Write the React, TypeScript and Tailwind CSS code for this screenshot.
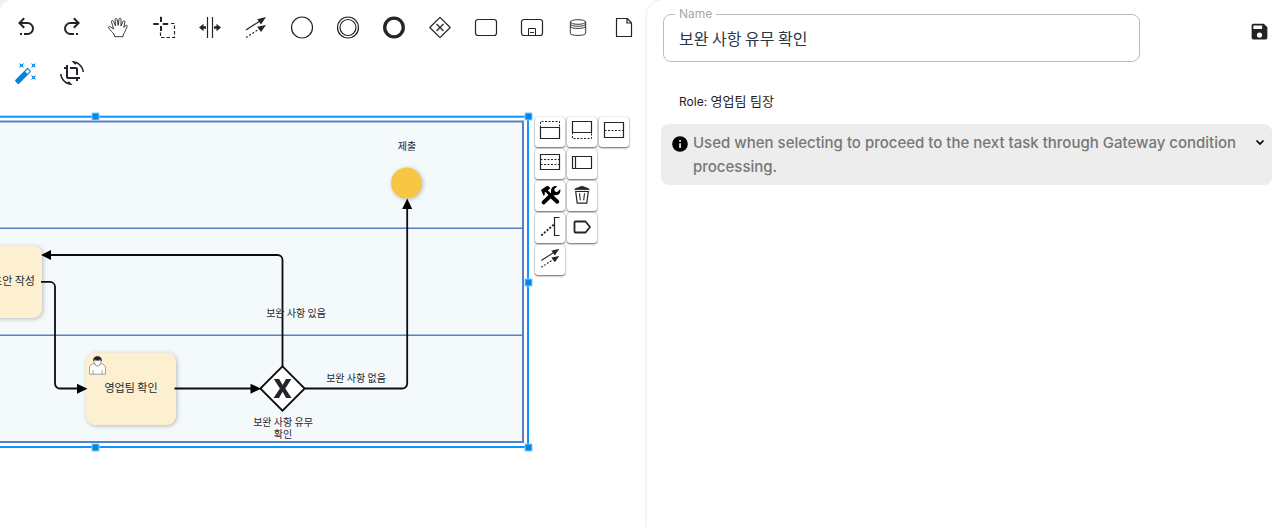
import { useState } from "react";
import type { ReactNode } from "react";

type Tool = { label: string; icon: ReactNode; accent?: boolean };

const line = { fill: "none", stroke: "currentColor", strokeWidth: 1.2 };

function FlowArrows() {
  return (
    <g>
      <path d="M2 15 16 6" {...line} />
      <path d="m22 2-5 7.400-3.800-5.200z" fill="currentColor" />
      <path d="M2 22.500 16 13.500" {...line} strokeDasharray="2 1.800" />
      <path d="m22 10-5 7-3.800-5.200z" fill="currentColor" />
    </g>
  );
}

const tools: Tool[] = [
  {
    label: "Undo",
    icon: (
      <path fill="currentColor" d="M13.5,7A6.5,6.5 0 0,1 20,13.5A6.5,6.5 0 0,1 13.5,20H10V18H13.5C16,18 18,16 18,13.5C18,11 16,9 13.5,9H7.83L10.91,12.09L9.5,13.5L4,8L9.5,2.5L10.92,3.91L7.83,7H13.5M6,18H8V20H6V18Z" />
    ),
  },
  {
    label: "Redo",
    icon: (
      <path fill="currentColor" d="M10.5,7A6.5,6.5 0 0,0 4,13.5A6.5,6.5 0 0,0 10.5,20H14V18H10.5C8,18 6,16 6,13.5C6,11 8,9 10.5,9H16.17L13.09,12.09L14.5,13.5L20,8L14.5,2.5L13.08,3.91L16.17,7H10.5M18,18H16V20H18V18Z" />
    ),
  },
  {
    label: "Hand tool",
    icon: (
      <path
        {...line}
        strokeWidth={0.9}
        strokeLinejoin="round"
        d="M8.500 21.700 8 19 C6.500 17.500 4.500 15.500 2.800 13 C2 11.700 3.500 11 4.600 11.900 L7.500 14 C7.300 11.500 5.800 9 5.500 6.800 C5.300 5.300 7 4.900 7.600 6.400 L9.500 10.800 9.100 4.600 C9.100 3.100 10.900 3 11.200 4.500 L12.200 10.400 13 4.200 C13.300 2.800 15 3 15 4.500 L15 11 17 6.500 C17.600 5.200 19.200 5.700 18.900 7.200 L17.800 12.300 19.800 10.600 C20.800 9.800 21.800 10.800 21 11.900 C19.500 14.500 19.300 17 17.500 19 L17 21.700 Z"
      />
    ),
  },
  {
    label: "Lasso tool",
    icon: (
      <g>
        <path d="M1.300 9h5.500M10.700 9h5.500M9 1.700v5.300M9 11v5" {...line} strokeWidth={2} />
        <path d="M19 8.500h3.500v14h-14v-6" {...line} strokeDasharray="3.500 2" />
      </g>
    ),
  },
  {
    label: "Space tool",
    icon: (
      <g>
        <path d="M9.500 2v21M14.500 2v21" {...line} />
        <path d="m1 12.500 4.500-3.700v2.500h2.500v2.400H5.500v2.500zM23 12.500l-4.500-3.700v2.500H16v2.400h2.500v2.500z" fill="currentColor" />
      </g>
    ),
  },
  { label: "Connect", icon: <FlowArrows /> },
  { label: "Start event", icon: <circle cx="12" cy="12.500" r="10.500" {...line} /> },
  {
    label: "Intermediate event",
    icon: (
      <g {...line}>
        <circle cx="12" cy="12.500" r="10.500" />
        <circle cx="12" cy="12.500" r="8" />
      </g>
    ),
  },
  { label: "End event", icon: <circle cx="12" cy="12.500" r="9.300" {...line} strokeWidth={3.300} /> },
  {
    label: "Gateway",
    icon: (
      <g {...line}>
        <path d="M12 2.300 22.200 12.500 12 22.700 1.800 12.500z" strokeLinejoin="round" />
        <path d="m8.500 9 7 7m0-7-7 7" />
      </g>
    ),
  },
  { label: "Task", icon: <rect x="1.500" y="4.500" width="21" height="16" rx="2.500" {...line} /> },
  {
    label: "Sub-process",
    icon: (
      <g {...line}>
        <rect x="1.500" y="4.500" width="21" height="16" rx="2.500" />
        <path d="M8.500 20.500v-7h7v7M10 17.500h4" strokeWidth={1} />
      </g>
    ),
  },
  {
    label: "Data store",
    icon: (
      <g {...line} strokeWidth={0.9}>
        <ellipse cx="12" cy="7" rx="7.700" ry="2.300" />
        <path d="M4.300 7v11.200c0 3 15.400 3 15.400 0V7M4.300 9c0 3 15.400 3 15.400 0M4.300 11.200c0 3 15.400 3 15.400 0" />
      </g>
    ),
  },
  {
    label: "Data object",
    icon: <path d="M4.500 3.500h11l4 4.500v13.500h-15zM15 3.500V8h4.500" {...line} />,
  },
  {
    label: "Auto layout",
    accent: true,
    icon: (
      <path fill="currentColor" d="M7.5,5.6L5,7L6.4,4.5L5,2L7.5,3.4L10,2L8.6,4.5L10,7L7.5,5.6M19.5,15.4L22,14L20.6,16.5L22,19L19.5,17.6L17,19L18.4,16.5L17,14L19.5,15.4M22,2L20.6,4.5L22,7L19.5,5.6L17,7L18.4,4.5L17,2L19.5,3.4L22,2M13.34,12.78L15.78,10.34L13.66,8.22L11.22,10.66L13.34,12.78M14.37,7.29L16.71,9.63C17.1,10 17.1,10.65 16.71,11.04L5.04,22.71C4.65,23.1 4,23.1 3.63,22.71L1.29,20.37C.9,20 .9,19.35 1.29,18.96L12.96,7.29C13.35,6.9 14,6.9 14.37,7.29Z" />
    ),
  },
  {
    label: "Change orientation",
    icon: (
      <path fill="currentColor" d="M7.47,21.5C4.2,19.93 1.86,16.76 1.5,13H0C0.5,19.16 5.66,24 11.95,24C12.18,24 12.39,24 12.61,23.97L8.8,20.15L7.47,21.5M12.05,0C11.82,0 11.61,0 11.39,0.04L15.2,3.85L16.53,2.5C19.8,4.07 22.14,7.24 22.5,11H24C23.5,4.84 18.34,0 12.05,0M16,14H18V8C18,6.89 17.1,6 16,6H10V8H16V14M8,16V4H6V6H4V8H6V16A2,2 0 0,0 8,18H16V20H18V18H20V16H8Z" />
    ),
  },
];

const padRows: Tool[][] = [
  [
    {
      label: "Add lane above",
      icon: (
        <g {...line}>
          <path d="M5.500 10.500h19v11h-19z" />
          <path d="M5.500 10.500v-6h19v6" strokeWidth={1} strokeDasharray="2 1.500" />
        </g>
      ),
    },
    {
      label: "Add lane below",
      icon: (
        <g {...line}>
          <path d="M5.500 4.500h19v11h-19z" />
          <path d="M5.500 15.500v6h19v-6" strokeWidth={1} strokeDasharray="2 1.500" />
        </g>
      ),
    },
    {
      label: "Divide into two lanes",
      icon: (
        <g {...line}>
          <path d="M5.500 5.500h19v15h-19z" />
          <path d="M5.500 13.500h19" strokeWidth={1} strokeDasharray="2 1.500" />
        </g>
      ),
    },
  ],
  [
    {
      label: "Divide into three lanes",
      icon: (
        <g {...line}>
          <path d="M5.500 5.500h19v15h-19z" />
          <path d="M5.500 10.500h19M5.500 15.500h19" strokeWidth={1} strokeDasharray="2 1.500" />
        </g>
      ),
    },
    {
      label: "Participant",
      icon: <path d="M5.500 7.500h19v12h-19zM8.500 7.500v12" {...line} />,
    },
  ],
  [
    {
      label: "Change element",
      icon: (
        <g>
          <path
            d="m6 9 5-3.500c1.200-.8 2.500-.5 3.500.5l.8 1.200-2.500 2L16 12.500l-2 2L10.500 11l-1 .8.5 1.700-1.500 1.300z"
            fill="#000"
          />
          <path d="m15.500 14.500 6.800 6.200" stroke="#000" strokeWidth="4" strokeLinecap="round" fill="none" />
          <path d="M8.500 21.500 18.500 12" stroke="#000" strokeWidth="3.800" strokeLinecap="round" fill="none" />
          <path
            d="M22.200 5.200 19.300 8l.5 2.500 2.500.5 2.900-2.800c.8 2.800-.8 5.800-4 6-3 .2-5.700-2-5.200-5 .4-3 3.200-4.700 6.200-4z"
            fill="#000"
          />
        </g>
      ),
    },
    {
      label: "Delete",
      icon: (
        <g {...line}>
          <path d="M7.500 8.700c.8-2 3.500-1.700 5-2.700s3.500-1 5 0 4.200.7 5 2.700z" fill="currentColor" strokeWidth={0.500} />
          <path d="m8.700 10.500 1.500 11.700h9.600l1.500-11.700z" />
          <path d="m12.500 12.300.8 7M17.500 12.300l-.8 7" strokeWidth={1.100} />
        </g>
      ),
    },
  ],
  [
    {
      label: "Add text annotation",
      icon: (
        <g {...line}>
          <path d="M24.500 4.500h-5v18h5" />
          <path d="m7 21.800 11-9.500" strokeWidth={2.200} strokeLinecap="round" strokeDasharray="0.100 3.500" />
        </g>
      ),
    },
    {
      label: "Data input",
      icon: <path d="M8.500 8.500h10l4.500 5.500-4.500 5.500h-10a1 1 0 0 1-1-1v-9a1 1 0 0 1 1-1z" {...line} strokeWidth={1.800} strokeLinejoin="round" />,
    },
  ],
  [
    {
      label: "Connect element",
      icon: (
        <g transform="translate(4.500 2) scale(0.900)">
          <FlowArrows />
        </g>
      ),
    },
  ],
];

const handles = [
  [95, 116],
  [528, 116],
  [528, 282],
  [528, 447],
  [95, 447],
];

function Diagram() {
  return (
    <svg
      className="absolute top-0 left-0 font-['Noto_Sans_CJK_KR',sans-serif]"
      width="647"
      height="360"
      viewBox="0 96 647 360"
      role="img"
      aria-label="Process diagram"
    >
      <defs>
        <filter id="soft" x="-20%" y="-20%" width="140%" height="140%" colorInterpolationFilters="sRGB">
          <feDropShadow dx="1" dy="1" stdDeviation="2" floodColor="#000" floodOpacity="0.250" />
        </filter>
      </defs>

      <g stroke="#5b7fc4" fill="none">
        <rect x="-20" y="121.500" width="543" height="320.500" fill="#f4f9fc" strokeWidth="2" />
        <path d="M0 228.300h523M0 335.300h523" strokeWidth="1.500" />
      </g>

      <rect x="-20" y="116.700" width="548" height="330.300" fill="none" stroke="#0d96ff" strokeWidth="2" />
      {handles.map(([x, y]) => (
        <rect key={`${x}-${y}`} x={x - 3} y={y - 3} width="7" height="7" fill="#0086ea" stroke="#8accfa" strokeWidth="1" />
      ))}

      <g fill="#fcf0d0" filter="url(#soft)">
        <rect x="-48" y="245.500" width="90" height="72.500" rx="9" />
        <rect x="86" y="352.500" width="90" height="72.500" rx="9" />
      </g>
      <circle cx="406.500" cy="183" r="15.500" fill="#f6c644" filter="url(#soft)" />

      <g fill="none" stroke="#0c0c0c" strokeWidth="1.800">
        <path d="M282.500 367V260a5 5 0 0 0-5-5H50" />
        <path d="M41 281.800h9a5 5 0 0 1 5 5v96.700a5 5 0 0 0 5 5h18" />
        <path d="M174.500 388.500H252" />
        <path d="M304 388.500h98.200a5 5 0 0 0 5-5V208" />
        <path d="m282.500 366.300 22.200 22.200-22.200 22.200-22.200-22.200z" fill="#fff" />
      </g>
      <g fill="#000">
        <path d="m41 255 10-5v10zM87.500 388.700l-10.500-5v10zM261 388.700l-10.500-5v10zM407.200 198.500l-5 10.500h10z" />
      </g>
      <path
        d="M273.800 379h5.400l3.400 6 3.400-6h5.400l-6.100 9.500 6.300 9.500h-5.400l-3.600-6.200-3.600 6.200h-5.400l6.300-9.500z"
        fill="#24252c"
      />

      <g stroke="#8a8a8a" strokeWidth="0.800">
        <path d="M94 363.500c-3 .8-4.500 2.200-4.500 4.500v6.200h16V368c0-2.300-1.500-3.700-4.500-4.500-1.500 3-5.500 3-7 0z" fill="#fff" />
        <path d="M93 370v4.200M102 370v4.200" />
        <path d="M93.700 360.500c.2 2 1 3 1.800 3.700-.5 2.200 4.500 2.200 4 0 .8-.7 1.600-1.700 1.800-3.700z" fill="#fff" />
        <path d="M93.200 361.500c-1.200-7 9.800-7 8.600 0-1-1.700-1.200-2-2-1.700-2 .7-2.600.7-4.600 0-.8-.3-1 0-2 1.700z" fill="#24252c" stroke="none" />
      </g>

      <g fill="#26262d" textAnchor="middle" fontSize="10">
        <text x="407" y="150">제출</text>
        <text x="296" y="317">보완 사항 있음</text>
        <text x="356" y="382">보완 사항 없음</text>
        <text x="283" y="426">보완 사항 유무</text>
        <text x="283" y="438">확인</text>
      </g>
      <g fill="#26262d" fontSize="11">
        <text x="35" y="285" textAnchor="end">초안 작성</text>
        <text x="131" y="392" textAnchor="middle">영업팀 확인</text>
      </g>
    </svg>
  );
}

function ContextPad() {
  return (
    <div className="absolute top-[21px] left-[535px] flex flex-col gap-0.5">
      {padRows.map((row, i) => (
        <div key={i} className="flex gap-0.5">
          {row.map((tool) => (
            <button
              key={tool.label}
              type="button"
              aria-label={tool.label}
              className="size-[30px] rounded-[3px] bg-white text-[#22242a] shadow-[0_1px_2px_rgba(0,0,0,0.6),0_0_1px_rgba(0,0,0,0.3)]"
            >
              <svg width="30" height="30" viewBox="0 0 30 30" aria-hidden="true">
                {tool.icon}
              </svg>
            </button>
          ))}
        </div>
      ))}
    </div>
  );
}

export default function App() {
  const [name, setName] = useState("보완 사항 유무 확인");
  const [open, setOpen] = useState(true);

  return (
    <div className="flex min-h-screen bg-[#edf2f9] font-['Inter','Noto_Sans_CJK_KR',sans-serif]">
      <main className="min-w-0 flex-1 overflow-hidden rounded-tl-xl bg-white">
        <div role="toolbar" aria-label="Modeling tools" className="flex flex-wrap pt-1 pl-[3px]">
          {tools.map((tool) => (
            <button
              key={tool.label}
              type="button"
              aria-label={tool.label}
              className={
                tool.accent
                  ? "flex size-[46px] items-center justify-center text-[#0085db]"
                  : "flex size-[46px] items-center justify-center text-[#22242a]"
              }
            >
              <svg width="24" height="24" viewBox="0 0 24 24" aria-hidden="true">
                {tool.icon}
              </svg>
            </button>
          ))}
        </div>
        <div className="relative">
          <Diagram />
          <ContextPad />
        </div>
      </main>

      <div className="w-[625px] shrink-0 bg-white">
        <aside className="min-h-screen rounded-tl-2xl pl-3.5 shadow-[0_0_3px_rgba(0,0,0,0.16)]">
          <div className="flex items-start pt-3.5 pl-0.5">
            <div className="relative min-w-0 flex-1">
              <label htmlFor="element-name" className="absolute -top-2 left-3 bg-white px-1 text-xs leading-4 text-[#a6a6a6]">
                Name
              </label>
              <input
                id="element-name"
                value={name}
                onChange={(e) => setName(e.target.value)}
                className="h-12 w-full rounded-lg border border-[#bdbdbd] bg-white px-[15px] font-['Noto_Sans_CJK_KR',sans-serif] text-base text-[#2a3547] outline-none"
              />
            </div>
            <div className="flex w-[132px] justify-end pt-[7px] pr-0.5">
              <button type="button" aria-label="Save" className="text-[#222]">
                <svg width="21" height="21" viewBox="0 0 24 24" aria-hidden="true">
                  <path fill="currentColor" d="M15,9H5V5H15M12,19A3,3 0 0,1 9,16A3,3 0 0,1 12,13A3,3 0 0,1 15,16A3,3 0 0,1 12,19M17,3H5C3.89,3 3,3.9 3,5V19A2,2 0 0,0 5,21H19A2,2 0 0,0 21,19V7L17,3Z" />
                </svg>
              </button>
            </div>
          </div>

          <p className="px-[18px] pt-[29px] pb-3 text-xs leading-5 text-[#1c1c1c]">
            Role: <span className="text-[13px]">영업팀 팀장</span>
          </p>

          <section className="flex items-start gap-1 rounded-lg bg-[#ededed] pt-[7px] pr-1 pb-1.5 pl-2.5">
            <svg className="mt-1 shrink-0" width="18" height="18" viewBox="0 0 18 18" aria-hidden="true">
              <circle cx="9" cy="9" r="7.800" fill="#000" />
              <path d="M8.200 8.200h1.700v4.800H8.200zM8.200 5h1.700v1.700H8.200z" fill="#ededed" />
            </svg>
            <p className={open ? "min-w-0 flex-1 text-[15px] leading-6 font-medium text-[#777]" : "min-w-0 flex-1 truncate text-[15px] leading-6 font-medium text-[#777]"}>
              Used when selecting to proceed to the next task through Gateway condition processing.
            </p>
            <button type="button" aria-label="Toggle description" aria-expanded={open} onClick={() => setOpen(!open)} className="mt-[3px]">
              <svg width="16" height="16" viewBox="0 0 16 16" aria-hidden="true">
                <path d="M4.500 6.500 8 10l3.500-3.500" fill="none" stroke="#000" strokeWidth="1.700" />
              </svg>
            </button>
          </section>
        </aside>
      </div>
    </div>
  );
}
